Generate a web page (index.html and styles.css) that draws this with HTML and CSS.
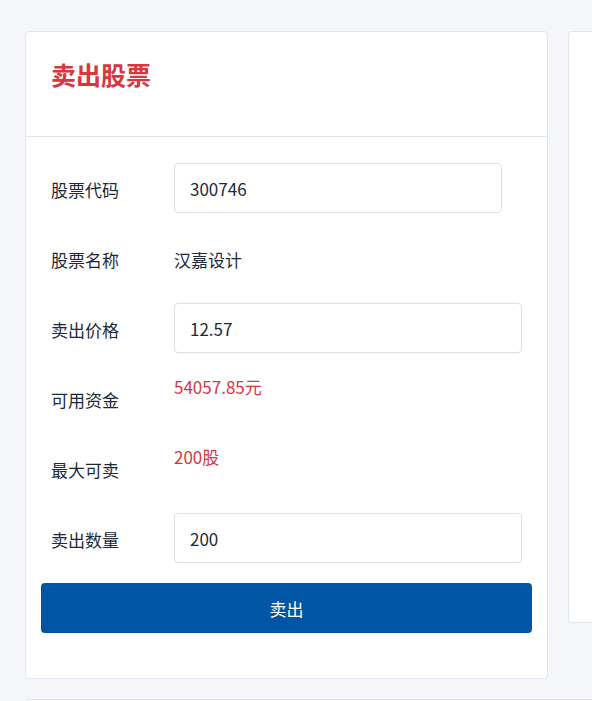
FILE: index.html
```html
<!DOCTYPE html>
<html lang="zh-CN">
<head>
<meta charset="utf-8">
<title>卖出股票</title>
<link rel="stylesheet" href="styles.css">
</head>
<body>
<div class="page">
  <div class="top-row">
    <section class="card sell-card">
      <header class="card-header">
        <h2 class="card-title">卖出股票</h2>
      </header>
      <div class="card-body">
        <div class="form-row">
          <label class="form-label">股票代码</label>
          <input class="form-input narrow" type="text" value="300746">
        </div>
        <div class="form-row">
          <label class="form-label">股票名称</label>
          <span class="form-text">汉嘉设计</span>
        </div>
        <div class="form-row">
          <label class="form-label">卖出价格</label>
          <input class="form-input" type="text" value="12.57">
        </div>
        <div class="form-row top">
          <label class="form-label">可用资金</label>
          <span class="form-text red">54057.85元</span>
        </div>
        <div class="form-row top">
          <label class="form-label">最大可卖</label>
          <span class="form-text red">200股</span>
        </div>
        <div class="form-row">
          <label class="form-label">卖出数量</label>
          <input class="form-input" type="text" value="200">
        </div>
        <button class="submit-btn" type="button">卖出</button>
      </div>
    </section>
    <section class="card side-card"></section>
  </div>
  <section class="card bottom-card"></section>
</div>
</body>
</html>
```

FILE: styles.css
```css
* { box-sizing: border-box; }
html, body {
  margin: 0;
  padding: 0;
  background: #f5f6fa;
  font-family: "Noto Sans CJK SC", "Noto Sans", sans-serif;
  color: #1c2a3a;
  overflow: hidden;
}
.page {
  width: 592px;
  height: 701px;
  padding: 31px 0 0 25px;
  overflow: hidden;
}
.top-row {
  display: flex;
  align-items: flex-start;
  gap: 20px;
}
.card {
  background: #fff;
  border: 1px solid #e2e5ea;
  border-radius: 4px;
}
.sell-card {
  width: 523px;
  flex: none;
}
.side-card {
  flex: 1;
  min-width: 0;
  height: 592px;
  border-right: none;
  border-top-right-radius: 0;
  border-bottom-right-radius: 0;
}
.bottom-card {
  margin-top: 20px;
  height: 2px;
  margin-left: 1px;
  border-right: none;
  border-bottom: none;
  border-radius: 4px 0 0 0;
}
.card-header {
  height: 105px;
  border-bottom: 1px solid #e2e5ea;
  padding: 30px 0 0 25px;
}
.card-title {
  margin: 0;
  font-size: 25px;
  font-weight: 700;
  color: #d9363e;
  line-height: 1;
}
.card-body {
  padding: 26px 15px 45px;
}
.form-row {
  display: flex;
  align-items: center;
  height: 50px;
  margin-bottom: 20px;
}
.form-row.top {
  align-items: flex-start;
}
.form-row.top .form-label {
  align-self: center;
}
.form-label {
  width: 133px;
  flex: none;
  padding-left: 10px;
  font-size: 17px;
  line-height: 1;
  padding-top: 3px;
}
.form-text {
  font-size: 17px;
  line-height: 28px;
}
.form-row:not(.top) .form-text {
  padding-top: 3px;
}
.form-text.red {
  color: #d9363e;
  line-height: 28px;
}
.form-input {
  width: 348px;
  height: 50px;
  border: 1px solid #dcdfe6;
  border-radius: 4px;
  padding: 0 15px;
  font-family: inherit;
  font-size: 17px;
  color: #1c2a3a;
  background: #fff;
  outline: none;
}
.form-input.narrow {
  width: 328px;
}
.submit-btn {
  display: block;
  width: 100%;
  height: 50px;
  border: none;
  border-radius: 4px;
  background: #0055a5;
  color: #fff;
  font-family: inherit;
  font-size: 17px;
  cursor: pointer;
}
```
